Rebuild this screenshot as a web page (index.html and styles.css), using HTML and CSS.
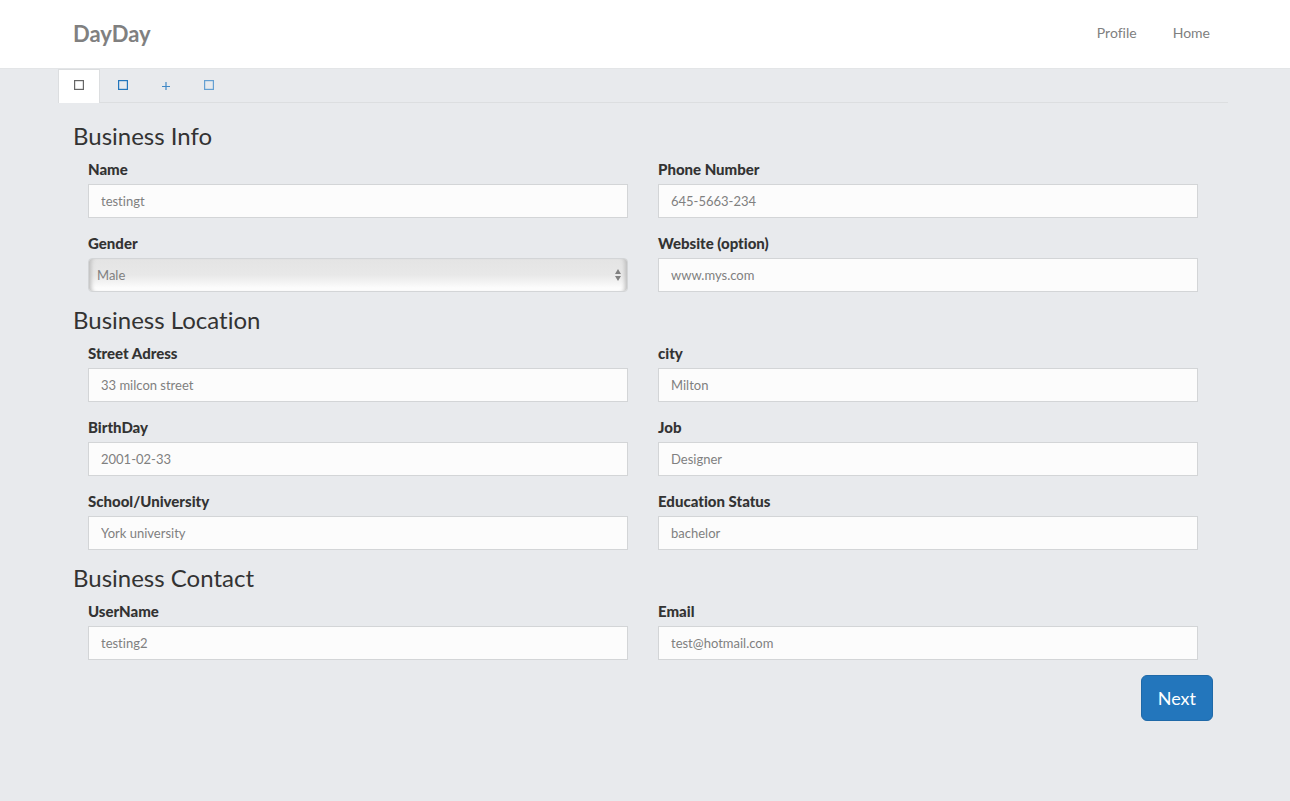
FILE: index.html
```html
<!DOCTYPE html>
<html lang="en">
<head>
<meta charset="utf-8">
<meta name="viewport" content="width=device-width, initial-scale=1">
<title>DayDay</title>
<link rel="stylesheet" href="styles.css">
</head>
<body>
<header class="site-header">
  <div class="container header-inner">
    <a class="brand" href="#">DayDay</a>
    <nav class="main-nav">
      <a href="#">Profile</a>
      <a href="#">Home</a>
    </nav>
  </div>
</header>
<main class="page">
  <div class="container">
  <nav class="tabs" aria-label="Form steps">
    <a class="tab tab-active" href="#" aria-label="Business" aria-current="step"><svg width="10" height="10" viewBox="0 0 10 10"><rect x=".6" y=".6" width="8.8" height="8.8"/></svg></a>
    <a class="tab" href="#" aria-label="Details"><svg width="10" height="10" viewBox="0 0 10 10"><rect x=".6" y=".6" width="8.8" height="8.8"/></svg></a>
    <a class="tab tab-add" href="#" aria-label="Add"><svg width="8" height="8" viewBox="0 0 8 8"><path d="M4 0v8M0 4.5h8"/></svg></a>
    <a class="tab tab-light" href="#" aria-label="Finish"><svg width="10" height="10" viewBox="0 0 10 10"><rect x=".6" y=".6" width="8.8" height="8.8"/></svg></a>
  </nav>
  <form class="form">
    <h3>Business Info</h3>
    <div class="fields">
      <div class="field"><label for="name">Name</label><input id="name" type="text" value="testingt"></div>
      <div class="field"><label for="phone">Phone Number</label><input id="phone" type="text" value="645-5663-234"></div>
      <div class="field"><label for="gender">Gender</label>
        <div class="select-wrap">
          <select id="gender"><option>Male</option><option>Female</option></select>
          <svg class="arrows" width="6" height="12" viewBox="0 0 6 12"><path d="M0 5L3 0l3 5zM0 7h6l-3 5z"/></svg>
        </div>
      </div>
      <div class="field"><label for="website">Website (option)</label><input id="website" type="text" value="www.mys.com"></div>
    </div>
    <h3>Business Location</h3>
    <div class="fields">
      <div class="field"><label for="street">Street Adress</label><input id="street" type="text" value="33 milcon street"></div>
      <div class="field"><label for="city">city</label><input id="city" type="text" value="Milton"></div>
      <div class="field"><label for="birthday">BirthDay</label><input id="birthday" type="text" value="2001-02-33"></div>
      <div class="field"><label for="job">Job</label><input id="job" type="text" value="Designer"></div>
      <div class="field"><label for="school">School/University</label><input id="school" type="text" value="York university"></div>
      <div class="field"><label for="education">Education Status</label><input id="education" type="text" value="bachelor"></div>
    </div>
    <h3>Business Contact</h3>
    <div class="fields">
      <div class="field"><label for="username">UserName</label><input id="username" type="text" value="testing2"></div>
      <div class="field"><label for="email">Email</label><input id="email" type="text" value="test@hotmail.com"></div>
    </div>
    <div class="actions"><button class="next" type="button">Next</button></div>
  </form>
  </div>
</main>
</body>
</html>
```
FILE: styles.css
```css
* { box-sizing: border-box; }

body {
  margin: 0;
  background: #e8eaed;
  color: #333;
  font: 14px/20px Lato, sans-serif;
  font-variant-ligatures: none;
}

.container {
  max-width: 1170px;
  margin: 0 auto;
}

.site-header {
  padding-right: 4px;
  background: #fff;
  border-bottom: 1px solid #e3e5e7;
}

.page { padding-right: 4px; }

.header-inner {
  display: flex;
  align-items: center;
  justify-content: space-between;
  padding: 19px 18px 19px 15px;
}

.brand {
  color: #808080;
  font-size: 22px;
  line-height: 30px;
  font-weight: 700;
  text-decoration: none;
}

.main-nav {
  display: flex;
  gap: 36px;
  padding-bottom: 2px;
}

.main-nav a {
  color: #808080;
  font-family: Lato, sans-serif;
  font-size: 14px;
  text-decoration: none;
}

.tabs {
  display: flex;
  gap: 2px;
  border-bottom: 1px solid #dcdee0;
}

.tab {
  display: flex;
  align-items: center;
  justify-content: center;
  width: 42px;
  height: 34px;
  margin-bottom: -1px;
  padding-bottom: 3px;
  border: 1px solid transparent;
  border-bottom: 0;
  color: #2376bc;
}

.tab-active {
  background: #fff;
  border-color: #dcdee0;
  color: #666;
}

.tab-add {
  width: 40px;
  padding-bottom: 1px;
  color: #4189c6;
}

.tab-light { color: #65a0d2; }

.tab svg {
  fill: none;
  stroke: currentColor;
  stroke-width: 1.2;
}

.form { padding: 20px 15px 0; }

h3 {
  margin: 0 0 10px;
  font-size: 24px;
  line-height: 26px;
  font-weight: 400;
}

.fields {
  display: grid;
  grid-template-columns: 1fr 1fr;
  gap: 15px 30px;
  padding: 0 15px 15px;
}

.field {
  display: flex;
  flex-direction: column;
  gap: 5px;
}

label {
  font-size: 15px;
  font-weight: 900;
}

input,
select {
  width: 100%;
  height: 34px;
  padding: 6px 12px;
  border: 1px solid #d3d5d7;
  border-radius: 0;
  background: #fcfcfc;
  color: #808080;
  font: 13px/20px Lato, sans-serif;
  font-variant-ligatures: none;
}

.select-wrap { position: relative; }

select {
  display: block;
  padding: 6px 8px;
  appearance: none;
  border-radius: 4px;
  background: linear-gradient(#e4e4e4, #e8e8e8 50%, #fcfcfc 90%);
  box-shadow: inset 6px 0 4px -4px #bbb, inset -6px 0 4px -4px #bbb;
}

.arrows {
  position: absolute;
  top: 11px;
  right: 7px;
  fill: #808080;
  pointer-events: none;
}

.actions {
  display: flex;
  justify-content: flex-end;
}

.next {
  padding: 10px 16px;
  border: 1px solid #1f69a8;
  border-radius: 6px;
  background: #2376bc;
  color: #fff;
  font: 18px/24px Lato, sans-serif;
}
```
